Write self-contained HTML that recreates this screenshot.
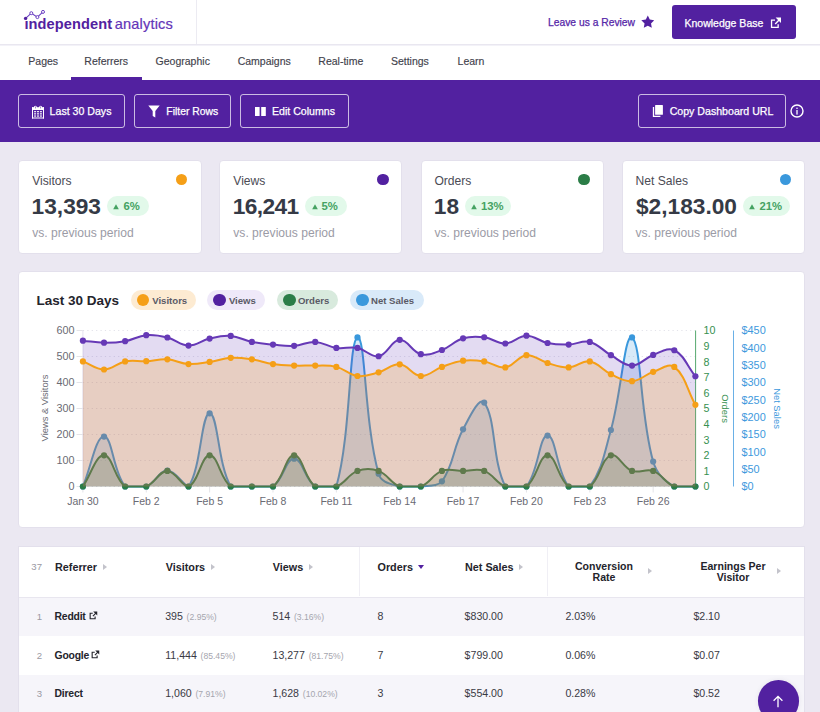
<!DOCTYPE html>
<html><head><meta charset="utf-8">
<style>
*{box-sizing:border-box;margin:0;padding:0}
html,body{width:820px;height:712px;overflow:hidden}
body{background:#ebe8f2;font-family:"Liberation Sans",sans-serif;position:relative}
.a{position:absolute;white-space:nowrap}
.hdr{position:absolute;left:0;top:0;width:820px;height:45px;background:#fff;border-bottom:1px solid #e9e7f0}
.tabs{position:absolute;left:0;top:45px;width:820px;height:35px;background:#fff}
.bar{position:absolute;left:0;top:80px;width:820px;height:61.6px;background:#5221a0}
.btn{position:absolute;border:1px solid rgba(255,255,255,0.7);border-radius:3px;color:#fff;font-size:10.6px}
.card{position:absolute;background:#fff;border:1px solid #e3e0ec;border-radius:4px}
.tl{font-family:"Liberation Sans",sans-serif;font-size:10.5px}
.at{font-family:"Liberation Sans",sans-serif;font-size:9.4px}
.tab{position:absolute;top:56px;font-size:10.5px;line-height:10.3px;color:#42424c;-webkit-text-stroke:0.15px #42424c}
.lbl{font-size:12.1px;line-height:12px;color:#4b4b55}
.num{font-size:22.7px;line-height:22px;color:#353a46;font-weight:700}
.sub{font-size:12.1px;line-height:12px;color:#9b9ba6}
.badge{position:absolute;height:20.4px;border-radius:10.2px;background:#e2f9ea;color:#3f9e5c;font-weight:700;font-size:11px}
.dot{position:absolute;width:11.5px;height:11.5px;border-radius:50%}
.pill{position:absolute;top:289.8px;height:20.5px;border-radius:10.25px}
.pill .pd{position:absolute;left:6px;top:3.9px;width:12.7px;height:12.7px;border-radius:50%}
.pill .pt{position:absolute;top:5.8px;font-size:9.6px;line-height:9.6px;font-weight:700;color:#5a5a66}
.th{position:absolute;font-size:10.8px;font-weight:700;color:#24242c;line-height:11.8px}
.td{position:absolute;font-size:10.6px;color:#3a3a44;line-height:11px}
.pc{font-size:8.6px;color:#a5a5ae;margin-left:0.8px}
.rn{position:absolute;font-size:9.6px;color:#9a9aa3;line-height:9px;text-align:right;width:20px}
.arr{position:absolute;width:0;height:0;border-top:3px solid transparent;border-bottom:3px solid transparent;border-left:4.5px solid #c3c3cb}
</style></head><body>

<!-- header -->
<div class="hdr"></div>
<div class="a" style="left:196px;top:0;width:1px;height:44px;background:#ecebf2"></div>
<!-- logo -->
<svg class="a" style="left:0;top:0" width="200" height="44" viewBox="0 0 200 44">
  <polyline points="25.6,18.4 31.3,13.2 37.4,17.1 43,11.9" fill="none" stroke="#6a3fc2" stroke-width="1.1"/>
  <circle cx="25.6" cy="18.4" r="1.7" fill="#5221a0"/>
  <circle cx="31.3" cy="13.2" r="1.5" fill="#fff" stroke="#6a3fc2" stroke-width="1"/>
  <circle cx="37.4" cy="17.1" r="1.5" fill="#fff" stroke="#6a3fc2" stroke-width="1"/>
  <circle cx="43" cy="11.9" r="1.5" fill="#fff" stroke="#6a3fc2" stroke-width="1"/>
</svg>
<div class="a" style="left:24.4px;top:16.5px;font-size:14.6px;line-height:14.6px;font-weight:700;color:#5221a0;letter-spacing:0.1px">ındependent</div>
<div class="a" style="left:114.8px;top:16.5px;font-size:14.6px;line-height:14.6px;color:#6435b8;letter-spacing:0.15px;-webkit-text-stroke:0.2px #6435b8">analytics</div>

<div class="a" style="left:548px;top:18.2px;font-size:10.3px;line-height:10.3px;color:#5526a8;-webkit-text-stroke:0.25px #5526a8">Leave us a Review</div>
<svg class="a" style="left:640.6px;top:15.4px" width="13.6" height="13.4" viewBox="0 0 24 23">
  <path d="M12 0.5l3.5 7.3 8 1.1-5.8 5.6 1.4 7.9L12 18.6l-7.1 3.8 1.4-7.9L0.5 8.9l8-1.1z" fill="#5221a0"/>
</svg>
<div class="a" style="left:672px;top:5px;width:124px;height:34px;background:#5221a0;border-radius:3px"></div>
<div class="a" style="left:684.5px;top:17.8px;font-size:10.5px;line-height:10.5px;color:#fff;-webkit-text-stroke:0.25px #fff">Knowledge Base</div>
<svg class="a" style="left:770px;top:16.5px" width="12" height="12" viewBox="0 0 12 12">
  <path d="M5 3.05H1.55V10.35H8.15V7.2" fill="none" stroke="#fff" stroke-width="1.3"/>
  <path d="M5.6 0.6H11V6z" fill="#fff"/>
  <path d="M5.2 6.9L9.6 2.5" fill="none" stroke="#fff" stroke-width="1.4"/>
</svg>

<!-- tabs -->
<div class="tabs"></div>
<div class="a" style="left:0;top:45px;width:820px;height:1px;background:#f3f2f8"></div>
<div class="tab" style="left:28.3px">Pages</div>
<div class="tab" style="left:84.3px">Referrers</div>
<div class="tab" style="left:155.6px">Geographic</div>
<div class="tab" style="left:237.7px">Campaigns</div>
<div class="tab" style="left:318.3px">Real-time</div>
<div class="tab" style="left:390.9px">Settings</div>
<div class="tab" style="left:457.6px">Learn</div>
<div class="a" style="left:71px;top:76.8px;width:71px;height:4px;background:#5221a0"></div>

<!-- purple bar -->
<div class="bar"></div>
<div class="btn" style="left:18px;top:94px;width:107px;height:34px"></div>
<svg class="a" style="left:32px;top:104.5px" width="12" height="14" viewBox="0 0 12 14">
  <rect x="0" y="2.2" width="12" height="2.8" fill="#fff"/>
  <rect x="0" y="2.2" width="1" height="11.3" fill="#fff"/>
  <rect x="11" y="2.2" width="1" height="11.3" fill="#fff"/>
  <rect x="0" y="12.5" width="12" height="1" fill="#fff"/>
  <circle cx="3.4" cy="2.3" r="1.5" fill="#fff"/><circle cx="8.6" cy="2.3" r="1.5" fill="#fff"/>
  <rect x="3.05" y="1.4" width="0.7" height="2" fill="#7a55bb"/><rect x="8.25" y="1.4" width="0.7" height="2" fill="#7a55bb"/>
  <g fill="#fff" opacity="0.9"><rect x="2.1" y="6" width="2" height="1.3"/><rect x="5" y="6" width="2" height="1.3"/><rect x="7.9" y="6" width="2" height="1.3"/>
  <rect x="2.1" y="8.2" width="2" height="1.3"/><rect x="5" y="8.2" width="2" height="1.3"/><rect x="7.9" y="8.2" width="2" height="1.3"/>
  <rect x="2.1" y="10.4" width="2" height="1.3"/><rect x="5" y="10.4" width="2" height="1.3"/><rect x="7.9" y="10.4" width="2" height="1.3"/></g>
</svg>
<div class="a" style="left:49.6px;top:106.4px;font-size:10.6px;line-height:10.6px;color:#fff;-webkit-text-stroke:0.25px #fff">Last 30 Days</div>

<div class="btn" style="left:134px;top:94px;width:97px;height:34px"></div>
<svg class="a" style="left:147.5px;top:104.8px" width="12" height="13" viewBox="0 0 12 13">
  <path d="M0.3 0.5h11.4L7.3 6v6.5L4.7 11V6z" fill="#fff"/>
</svg>
<div class="a" style="left:166.3px;top:106.6px;font-size:10.4px;line-height:10.6px;color:#fff;-webkit-text-stroke:0.25px #fff">Filter Rows</div>

<div class="btn" style="left:240px;top:94px;width:108.5px;height:34px"></div>
<svg class="a" style="left:254.5px;top:106.5px" width="11" height="9" viewBox="0 0 11 9">
  <rect x="0" y="0" width="4.6" height="9" fill="#fff"/><rect x="6.2" y="0" width="4.6" height="9" fill="#fff"/>
</svg>
<div class="a" style="left:272px;top:106.4px;font-size:10.6px;line-height:10.6px;color:#fff;-webkit-text-stroke:0.25px #fff">Edit Columns</div>

<div class="btn" style="left:638px;top:94.3px;width:148px;height:34px"></div>
<svg class="a" style="left:652px;top:104px" width="12" height="14" viewBox="0 0 12 14">
  <rect x="3.1" y="1.0" width="7.8" height="9.8" rx="0.5" fill="#fff"/>
  <path d="M1.5 3.1V12.4H8.4" fill="none" stroke="#fff" stroke-width="1.3"/>
</svg>
<div class="a" style="left:669.7px;top:106.4px;font-size:10.6px;line-height:10.6px;color:#fff;-webkit-text-stroke:0.25px #fff">Copy Dashboard URL</div>
<svg class="a" style="left:790.2px;top:104.3px" width="14" height="14" viewBox="0 0 14 14">
  <circle cx="7" cy="7" r="6" fill="none" stroke="#fff" stroke-width="1.4"/>
  <circle cx="7" cy="4.3" r="0.8" fill="#fff"/>
  <rect x="6.35" y="6" width="1.3" height="4.6" fill="#fff"/>
</svg>

<!-- stat cards -->
<div class="card" style="left:18px;top:160px;width:184px;height:94px"></div>
<div class="card" style="left:219px;top:160px;width:183px;height:94px"></div>
<div class="card" style="left:421px;top:160px;width:183px;height:94px"></div>
<div class="card" style="left:622px;top:160px;width:183px;height:94px"></div>

<div class="a lbl" style="left:32.2px;top:174.7px">Visitors</div>
<div class="dot" style="left:175.9px;top:173.8px;background:#f59f17"></div>
<div class="a num" style="left:31.6px;top:194.9px">13,393</div>
<div class="badge" style="left:107px;top:195.9px;width:42px"></div>
<svg class="a" style="left:113.4px;top:203.6px" width="6" height="6" viewBox="0 0 6 6"><path d="M3 0.3L5.8 5.2H0.2z" fill="#45a262"/></svg>
<div class="a" style="left:123.4px;top:201.1px;font-size:11.3px;line-height:11px;font-weight:700;color:#45a262">6%</div>
<div class="a sub" style="left:32.2px;top:227.4px">vs. previous period</div>

<div class="a lbl" style="left:233.3px;top:174.7px">Views</div>
<div class="dot" style="left:377px;top:173.8px;background:#5221a0"></div>
<div class="a num" style="left:232.7px;top:194.9px;letter-spacing:-0.6px">16,241</div>
<div class="badge" style="left:305.1px;top:195.9px;width:41.6px"></div>
<svg class="a" style="left:311.5px;top:203.6px" width="6" height="6" viewBox="0 0 6 6"><path d="M3 0.3L5.8 5.2H0.2z" fill="#45a262"/></svg>
<div class="a" style="left:321.5px;top:201.1px;font-size:11.3px;line-height:11px;font-weight:700;color:#45a262">5%</div>
<div class="a sub" style="left:233.3px;top:227.4px">vs. previous period</div>

<div class="a lbl" style="left:434.4px;top:174.7px">Orders</div>
<div class="dot" style="left:578.1px;top:173.8px;background:#2b7d47"></div>
<div class="a num" style="left:433.8px;top:194.9px">18</div>
<div class="badge" style="left:464.6px;top:195.9px;width:46.5px"></div>
<svg class="a" style="left:471.0px;top:203.6px" width="6" height="6" viewBox="0 0 6 6"><path d="M3 0.3L5.8 5.2H0.2z" fill="#45a262"/></svg>
<div class="a" style="left:481.0px;top:201.1px;font-size:11.3px;line-height:11px;font-weight:700;color:#45a262">13%</div>
<div class="a sub" style="left:434.4px;top:227.4px">vs. previous period</div>

<div class="a lbl" style="left:635.5px;top:174.7px">Net Sales</div>
<div class="dot" style="left:779.6px;top:173.8px;background:#3a98dc"></div>
<div class="a num" style="left:636px;top:194.9px">$2,183.00</div>
<div class="badge" style="left:743px;top:195.9px;width:46.6px"></div>
<svg class="a" style="left:749.4px;top:203.6px" width="6" height="6" viewBox="0 0 6 6"><path d="M3 0.3L5.8 5.2H0.2z" fill="#45a262"/></svg>
<div class="a" style="left:759.4px;top:201.1px;font-size:11.3px;line-height:11px;font-weight:700;color:#45a262">21%</div>
<div class="a sub" style="left:635.5px;top:227.4px">vs. previous period</div>

<!-- chart card -->
<div class="card" style="left:18px;top:271px;width:787px;height:256.5px"></div>
<div class="a" style="left:36.5px;top:293.8px;font-size:13.5px;line-height:13.5px;font-weight:700;color:#24242c">Last 30 Days</div>
<div class="pill" style="left:130.7px;width:65px;background:#fdebd2"><div class="pd" style="background:#f59f17"></div><div class="pt" style="left:21.5px">Visitors</div></div>
<div class="pill" style="left:207.4px;width:57.4px;background:#efe9f9"><div class="pd" style="background:#5221a0"></div><div class="pt" style="left:21.5px">Views</div></div>
<div class="pill" style="left:277.2px;width:61.1px;background:#d8eadd"><div class="pd" style="background:#2b7d47"></div><div class="pt" style="left:20.7px">Orders</div></div>
<div class="pill" style="left:350px;width:74.1px;background:#d9eaf9"><div class="pd" style="background:#3a98dc"></div><div class="pt" style="left:21px">Net Sales</div></div>

<svg width="820" height="712" viewBox="0 0 820 712" style="position:absolute;left:0;top:0">
<line x1="82.9" y1="330.50" x2="695.4" y2="330.50" stroke="#e3e3ea" stroke-width="1.1" stroke-dasharray="1.2,3.2"/>
<line x1="76.5" y1="330.50" x2="82.9" y2="330.50" stroke="#e4e4e8" stroke-width="1"/>
<line x1="82.9" y1="356.50" x2="695.4" y2="356.50" stroke="#e3e3ea" stroke-width="1.1" stroke-dasharray="1.2,3.2"/>
<line x1="76.5" y1="356.50" x2="82.9" y2="356.50" stroke="#e4e4e8" stroke-width="1"/>
<line x1="82.9" y1="382.50" x2="695.4" y2="382.50" stroke="#e3e3ea" stroke-width="1.1" stroke-dasharray="1.2,3.2"/>
<line x1="76.5" y1="382.50" x2="82.9" y2="382.50" stroke="#e4e4e8" stroke-width="1"/>
<line x1="82.9" y1="408.50" x2="695.4" y2="408.50" stroke="#e3e3ea" stroke-width="1.1" stroke-dasharray="1.2,3.2"/>
<line x1="76.5" y1="408.50" x2="82.9" y2="408.50" stroke="#e4e4e8" stroke-width="1"/>
<line x1="82.9" y1="434.50" x2="695.4" y2="434.50" stroke="#e3e3ea" stroke-width="1.1" stroke-dasharray="1.2,3.2"/>
<line x1="76.5" y1="434.50" x2="82.9" y2="434.50" stroke="#e4e4e8" stroke-width="1"/>
<line x1="82.9" y1="460.50" x2="695.4" y2="460.50" stroke="#e3e3ea" stroke-width="1.1" stroke-dasharray="1.2,3.2"/>
<line x1="76.5" y1="460.50" x2="82.9" y2="460.50" stroke="#e4e4e8" stroke-width="1"/>
<line x1="82.9" y1="486.50" x2="695.4" y2="486.50" stroke="#e3e3ea" stroke-width="1.1" stroke-dasharray="1.2,3.2"/>
<line x1="76.5" y1="486.50" x2="82.9" y2="486.50" stroke="#e4e4e8" stroke-width="1"/>
<line x1="82.90" y1="486.5" x2="82.90" y2="492.5" stroke="#e4e4e8" stroke-width="1"/>
<line x1="146.26" y1="486.5" x2="146.26" y2="492.5" stroke="#e4e4e8" stroke-width="1"/>
<line x1="209.62" y1="486.5" x2="209.62" y2="492.5" stroke="#e4e4e8" stroke-width="1"/>
<line x1="272.99" y1="486.5" x2="272.99" y2="492.5" stroke="#e4e4e8" stroke-width="1"/>
<line x1="336.35" y1="486.5" x2="336.35" y2="492.5" stroke="#e4e4e8" stroke-width="1"/>
<line x1="399.71" y1="486.5" x2="399.71" y2="492.5" stroke="#e4e4e8" stroke-width="1"/>
<line x1="463.07" y1="486.5" x2="463.07" y2="492.5" stroke="#e4e4e8" stroke-width="1"/>
<line x1="526.43" y1="486.5" x2="526.43" y2="492.5" stroke="#e4e4e8" stroke-width="1"/>
<line x1="589.80" y1="486.5" x2="589.80" y2="492.5" stroke="#e4e4e8" stroke-width="1"/>
<line x1="653.16" y1="486.5" x2="653.16" y2="492.5" stroke="#e4e4e8" stroke-width="1"/>
<line x1="82.90" y1="330.5" x2="82.90" y2="486.5" stroke="#e6e4f0" stroke-width="1"/>
<line x1="695.6" y1="330.5" x2="695.6" y2="486.5" stroke="#55a86e" stroke-width="1"/>
<line x1="733.5" y1="330.5" x2="733.5" y2="486.5" stroke="#6ab0e6" stroke-width="1"/>
<path d="M82.90,486.50 C91.35,466.53 95.57,436.58 104.02,436.58 C112.47,436.58 112.98,472.13 125.14,486.50 C129.88,486.50 138.76,486.50 146.26,486.50 C155.66,482.95 158.93,470.55 167.38,470.55 C175.83,470.55 184.15,486.50 188.50,486.50 C201.04,469.52 201.18,413.35 209.62,413.35 C218.07,413.35 217.52,463.60 230.74,486.50 C234.41,486.50 243.42,486.50 251.87,486.50 C260.31,486.50 266.61,486.50 272.99,486.50 C283.51,479.59 285.66,458.77 294.11,458.77 C302.56,458.77 304.71,479.59 315.23,486.50 C321.60,486.50 334.27,486.50 336.35,486.50 C351.17,434.21 348.65,340.11 357.47,337.43 C365.55,334.98 364.26,423.11 378.59,473.67 C381.16,482.74 390.60,483.73 399.71,486.50 C407.50,486.50 412.51,486.50 420.83,486.50 C429.40,485.44 437.23,486.50 441.95,481.30 C454.13,464.81 452.55,448.89 463.07,429.30 C469.45,417.42 479.42,396.15 484.19,402.61 C496.32,419.03 491.73,459.53 505.31,486.50 C508.63,486.50 521.76,486.50 526.43,486.50 C538.65,471.76 539.11,435.54 547.56,435.54 C556.00,435.54 556.46,471.76 568.68,486.50 C573.35,486.50 585.41,486.50 589.80,486.50 C602.31,469.76 604.35,453.16 610.92,429.99 C621.25,393.53 624.77,332.01 632.04,337.43 C641.67,344.63 639.75,414.21 653.16,461.54 C656.64,473.83 664.01,480.43 674.28,486.50 C680.91,486.50 686.95,486.50 695.40,486.50 L695.40,486.50 L82.90,486.50 Z" fill="rgba(58,152,220,0.2)"/><path d="M82.90,486.50 C91.35,466.53 95.57,436.58 104.02,436.58 C112.47,436.58 112.98,472.13 125.14,486.50 C129.88,486.50 138.76,486.50 146.26,486.50 C155.66,482.95 158.93,470.55 167.38,470.55 C175.83,470.55 184.15,486.50 188.50,486.50 C201.04,469.52 201.18,413.35 209.62,413.35 C218.07,413.35 217.52,463.60 230.74,486.50 C234.41,486.50 243.42,486.50 251.87,486.50 C260.31,486.50 266.61,486.50 272.99,486.50 C283.51,479.59 285.66,458.77 294.11,458.77 C302.56,458.77 304.71,479.59 315.23,486.50 C321.60,486.50 334.27,486.50 336.35,486.50 C351.17,434.21 348.65,340.11 357.47,337.43 C365.55,334.98 364.26,423.11 378.59,473.67 C381.16,482.74 390.60,483.73 399.71,486.50 C407.50,486.50 412.51,486.50 420.83,486.50 C429.40,485.44 437.23,486.50 441.95,481.30 C454.13,464.81 452.55,448.89 463.07,429.30 C469.45,417.42 479.42,396.15 484.19,402.61 C496.32,419.03 491.73,459.53 505.31,486.50 C508.63,486.50 521.76,486.50 526.43,486.50 C538.65,471.76 539.11,435.54 547.56,435.54 C556.00,435.54 556.46,471.76 568.68,486.50 C573.35,486.50 585.41,486.50 589.80,486.50 C602.31,469.76 604.35,453.16 610.92,429.99 C621.25,393.53 624.77,332.01 632.04,337.43 C641.67,344.63 639.75,414.21 653.16,461.54 C656.64,473.83 664.01,480.43 674.28,486.50 C680.91,486.50 686.95,486.50 695.40,486.50" fill="none" stroke="#3a98dc" stroke-width="2" stroke-linejoin="round"/><circle cx="82.90" cy="486.50" r="3.1" fill="#3a98dc"/><circle cx="104.02" cy="436.58" r="3.1" fill="#3a98dc"/><circle cx="125.14" cy="486.50" r="3.1" fill="#3a98dc"/><circle cx="146.26" cy="486.50" r="3.1" fill="#3a98dc"/><circle cx="167.38" cy="470.55" r="3.1" fill="#3a98dc"/><circle cx="188.50" cy="486.50" r="3.1" fill="#3a98dc"/><circle cx="209.62" cy="413.35" r="3.1" fill="#3a98dc"/><circle cx="230.74" cy="486.50" r="3.1" fill="#3a98dc"/><circle cx="251.87" cy="486.50" r="3.1" fill="#3a98dc"/><circle cx="272.99" cy="486.50" r="3.1" fill="#3a98dc"/><circle cx="294.11" cy="458.77" r="3.1" fill="#3a98dc"/><circle cx="315.23" cy="486.50" r="3.1" fill="#3a98dc"/><circle cx="336.35" cy="486.50" r="3.1" fill="#3a98dc"/><circle cx="357.47" cy="337.43" r="3.1" fill="#3a98dc"/><circle cx="378.59" cy="473.67" r="3.1" fill="#3a98dc"/><circle cx="399.71" cy="486.50" r="3.1" fill="#3a98dc"/><circle cx="420.83" cy="486.50" r="3.1" fill="#3a98dc"/><circle cx="441.95" cy="481.30" r="3.1" fill="#3a98dc"/><circle cx="463.07" cy="429.30" r="3.1" fill="#3a98dc"/><circle cx="484.19" cy="402.61" r="3.1" fill="#3a98dc"/><circle cx="505.31" cy="486.50" r="3.1" fill="#3a98dc"/><circle cx="526.43" cy="486.50" r="3.1" fill="#3a98dc"/><circle cx="547.56" cy="435.54" r="3.1" fill="#3a98dc"/><circle cx="568.68" cy="486.50" r="3.1" fill="#3a98dc"/><circle cx="589.80" cy="486.50" r="3.1" fill="#3a98dc"/><circle cx="610.92" cy="429.99" r="3.1" fill="#3a98dc"/><circle cx="632.04" cy="337.43" r="3.1" fill="#3a98dc"/><circle cx="653.16" cy="461.54" r="3.1" fill="#3a98dc"/><circle cx="674.28" cy="486.50" r="3.1" fill="#3a98dc"/><circle cx="695.40" cy="486.50" r="3.1" fill="#3a98dc"/>
<path d="M82.90,486.50 C91.35,474.02 95.57,455.30 104.02,455.30 C112.47,455.30 114.31,478.50 125.14,486.50 C131.21,486.50 138.73,486.50 146.26,486.50 C155.63,483.04 158.93,470.90 167.38,470.90 C175.83,470.90 181.56,486.50 188.50,486.50 C198.46,482.82 201.18,455.30 209.62,455.30 C218.07,455.30 219.92,478.50 230.74,486.50 C236.81,486.50 243.42,486.50 251.87,486.50 C260.31,486.50 266.92,486.50 272.99,486.50 C283.81,478.50 285.66,455.30 294.11,455.30 C302.56,455.30 304.40,478.50 315.23,486.50 C321.30,486.50 328.82,486.50 336.35,486.50 C345.71,483.04 348.10,474.36 357.47,470.90 C365.00,468.12 371.06,468.12 378.59,470.90 C387.95,474.36 390.35,483.04 399.71,486.50 C407.24,486.50 413.30,486.50 420.83,486.50 C430.20,483.04 432.59,474.36 441.95,470.90 C449.48,468.12 454.62,470.90 463.07,470.90 C471.52,470.90 476.66,468.12 484.19,470.90 C493.56,474.36 495.95,483.04 505.31,486.50 C512.85,486.50 520.37,486.50 526.43,486.50 C537.26,478.50 539.11,455.30 547.56,455.30 C556.00,455.30 557.85,478.50 568.68,486.50 C574.75,486.50 583.73,486.50 589.80,486.50 C600.62,478.50 600.96,458.98 610.92,455.30 C617.86,452.74 622.67,467.44 632.04,470.90 C639.57,473.68 645.63,468.12 653.16,470.90 C662.52,474.36 664.92,483.04 674.28,486.50 C681.81,486.50 686.95,486.50 695.40,486.50 L695.40,486.50 L82.90,486.50 Z" fill="rgba(43,125,71,0.2)"/><path d="M82.90,486.50 C91.35,474.02 95.57,455.30 104.02,455.30 C112.47,455.30 114.31,478.50 125.14,486.50 C131.21,486.50 138.73,486.50 146.26,486.50 C155.63,483.04 158.93,470.90 167.38,470.90 C175.83,470.90 181.56,486.50 188.50,486.50 C198.46,482.82 201.18,455.30 209.62,455.30 C218.07,455.30 219.92,478.50 230.74,486.50 C236.81,486.50 243.42,486.50 251.87,486.50 C260.31,486.50 266.92,486.50 272.99,486.50 C283.81,478.50 285.66,455.30 294.11,455.30 C302.56,455.30 304.40,478.50 315.23,486.50 C321.30,486.50 328.82,486.50 336.35,486.50 C345.71,483.04 348.10,474.36 357.47,470.90 C365.00,468.12 371.06,468.12 378.59,470.90 C387.95,474.36 390.35,483.04 399.71,486.50 C407.24,486.50 413.30,486.50 420.83,486.50 C430.20,483.04 432.59,474.36 441.95,470.90 C449.48,468.12 454.62,470.90 463.07,470.90 C471.52,470.90 476.66,468.12 484.19,470.90 C493.56,474.36 495.95,483.04 505.31,486.50 C512.85,486.50 520.37,486.50 526.43,486.50 C537.26,478.50 539.11,455.30 547.56,455.30 C556.00,455.30 557.85,478.50 568.68,486.50 C574.75,486.50 583.73,486.50 589.80,486.50 C600.62,478.50 600.96,458.98 610.92,455.30 C617.86,452.74 622.67,467.44 632.04,470.90 C639.57,473.68 645.63,468.12 653.16,470.90 C662.52,474.36 664.92,483.04 674.28,486.50 C681.81,486.50 686.95,486.50 695.40,486.50" fill="none" stroke="#2b7d47" stroke-width="2" stroke-linejoin="round"/><circle cx="82.90" cy="486.50" r="3.1" fill="#2b7d47"/><circle cx="104.02" cy="455.30" r="3.1" fill="#2b7d47"/><circle cx="125.14" cy="486.50" r="3.1" fill="#2b7d47"/><circle cx="146.26" cy="486.50" r="3.1" fill="#2b7d47"/><circle cx="167.38" cy="470.90" r="3.1" fill="#2b7d47"/><circle cx="188.50" cy="486.50" r="3.1" fill="#2b7d47"/><circle cx="209.62" cy="455.30" r="3.1" fill="#2b7d47"/><circle cx="230.74" cy="486.50" r="3.1" fill="#2b7d47"/><circle cx="251.87" cy="486.50" r="3.1" fill="#2b7d47"/><circle cx="272.99" cy="486.50" r="3.1" fill="#2b7d47"/><circle cx="294.11" cy="455.30" r="3.1" fill="#2b7d47"/><circle cx="315.23" cy="486.50" r="3.1" fill="#2b7d47"/><circle cx="336.35" cy="486.50" r="3.1" fill="#2b7d47"/><circle cx="357.47" cy="470.90" r="3.1" fill="#2b7d47"/><circle cx="378.59" cy="470.90" r="3.1" fill="#2b7d47"/><circle cx="399.71" cy="486.50" r="3.1" fill="#2b7d47"/><circle cx="420.83" cy="486.50" r="3.1" fill="#2b7d47"/><circle cx="441.95" cy="470.90" r="3.1" fill="#2b7d47"/><circle cx="463.07" cy="470.90" r="3.1" fill="#2b7d47"/><circle cx="484.19" cy="470.90" r="3.1" fill="#2b7d47"/><circle cx="505.31" cy="486.50" r="3.1" fill="#2b7d47"/><circle cx="526.43" cy="486.50" r="3.1" fill="#2b7d47"/><circle cx="547.56" cy="455.30" r="3.1" fill="#2b7d47"/><circle cx="568.68" cy="486.50" r="3.1" fill="#2b7d47"/><circle cx="589.80" cy="486.50" r="3.1" fill="#2b7d47"/><circle cx="610.92" cy="455.30" r="3.1" fill="#2b7d47"/><circle cx="632.04" cy="470.90" r="3.1" fill="#2b7d47"/><circle cx="653.16" cy="470.90" r="3.1" fill="#2b7d47"/><circle cx="674.28" cy="486.50" r="3.1" fill="#2b7d47"/><circle cx="695.40" cy="486.50" r="3.1" fill="#2b7d47"/>
<path d="M82.90,340.64 C91.35,341.47 95.56,342.62 104.02,342.72 C112.46,342.82 116.84,342.64 125.14,341.16 C133.74,339.62 137.68,335.92 146.26,335.18 C154.57,334.46 159.20,335.50 167.38,337.52 C176.09,339.66 179.99,345.37 188.50,345.58 C196.89,345.79 200.99,340.53 209.62,338.56 C217.88,336.68 222.43,335.29 230.74,335.96 C239.32,336.65 243.29,340.20 251.87,341.94 C260.18,343.63 264.51,343.76 272.99,344.54 C281.41,345.32 285.72,346.36 294.11,345.84 C302.62,345.32 306.87,341.53 315.23,341.94 C323.77,342.36 327.74,346.70 336.35,347.92 C344.63,349.09 349.33,346.32 357.47,347.92 C366.22,349.64 370.83,357.72 378.59,356.24 C387.73,354.50 391.06,340.29 399.71,339.86 C407.96,339.45 411.67,351.96 420.83,354.16 C428.56,356.02 433.99,352.99 441.95,350.00 C450.88,346.65 454.06,341.02 463.07,338.30 C470.96,335.92 475.92,336.24 484.19,337.26 C492.81,338.32 496.96,343.81 505.31,343.50 C513.86,343.18 517.95,335.80 526.43,335.70 C534.85,335.60 538.88,341.16 547.56,342.98 C555.78,344.70 560.25,344.75 568.68,344.54 C577.14,344.33 582.02,339.98 589.80,341.94 C598.91,344.24 602.23,350.33 610.92,355.20 C619.12,359.80 623.61,365.65 632.04,365.60 C640.51,365.55 644.33,358.15 653.16,354.94 C661.23,352.01 667.65,346.91 674.28,350.26 C684.55,355.44 686.95,365.86 695.40,376.26 L695.40,486.50 L82.90,486.50 Z" fill="rgba(102,57,182,0.18)"/><path d="M82.90,340.64 C91.35,341.47 95.56,342.62 104.02,342.72 C112.46,342.82 116.84,342.64 125.14,341.16 C133.74,339.62 137.68,335.92 146.26,335.18 C154.57,334.46 159.20,335.50 167.38,337.52 C176.09,339.66 179.99,345.37 188.50,345.58 C196.89,345.79 200.99,340.53 209.62,338.56 C217.88,336.68 222.43,335.29 230.74,335.96 C239.32,336.65 243.29,340.20 251.87,341.94 C260.18,343.63 264.51,343.76 272.99,344.54 C281.41,345.32 285.72,346.36 294.11,345.84 C302.62,345.32 306.87,341.53 315.23,341.94 C323.77,342.36 327.74,346.70 336.35,347.92 C344.63,349.09 349.33,346.32 357.47,347.92 C366.22,349.64 370.83,357.72 378.59,356.24 C387.73,354.50 391.06,340.29 399.71,339.86 C407.96,339.45 411.67,351.96 420.83,354.16 C428.56,356.02 433.99,352.99 441.95,350.00 C450.88,346.65 454.06,341.02 463.07,338.30 C470.96,335.92 475.92,336.24 484.19,337.26 C492.81,338.32 496.96,343.81 505.31,343.50 C513.86,343.18 517.95,335.80 526.43,335.70 C534.85,335.60 538.88,341.16 547.56,342.98 C555.78,344.70 560.25,344.75 568.68,344.54 C577.14,344.33 582.02,339.98 589.80,341.94 C598.91,344.24 602.23,350.33 610.92,355.20 C619.12,359.80 623.61,365.65 632.04,365.60 C640.51,365.55 644.33,358.15 653.16,354.94 C661.23,352.01 667.65,346.91 674.28,350.26 C684.55,355.44 686.95,365.86 695.40,376.26" fill="none" stroke="#6639b6" stroke-width="2" stroke-linejoin="round"/><circle cx="82.90" cy="340.64" r="3.1" fill="#6639b6"/><circle cx="104.02" cy="342.72" r="3.1" fill="#6639b6"/><circle cx="125.14" cy="341.16" r="3.1" fill="#6639b6"/><circle cx="146.26" cy="335.18" r="3.1" fill="#6639b6"/><circle cx="167.38" cy="337.52" r="3.1" fill="#6639b6"/><circle cx="188.50" cy="345.58" r="3.1" fill="#6639b6"/><circle cx="209.62" cy="338.56" r="3.1" fill="#6639b6"/><circle cx="230.74" cy="335.96" r="3.1" fill="#6639b6"/><circle cx="251.87" cy="341.94" r="3.1" fill="#6639b6"/><circle cx="272.99" cy="344.54" r="3.1" fill="#6639b6"/><circle cx="294.11" cy="345.84" r="3.1" fill="#6639b6"/><circle cx="315.23" cy="341.94" r="3.1" fill="#6639b6"/><circle cx="336.35" cy="347.92" r="3.1" fill="#6639b6"/><circle cx="357.47" cy="347.92" r="3.1" fill="#6639b6"/><circle cx="378.59" cy="356.24" r="3.1" fill="#6639b6"/><circle cx="399.71" cy="339.86" r="3.1" fill="#6639b6"/><circle cx="420.83" cy="354.16" r="3.1" fill="#6639b6"/><circle cx="441.95" cy="350.00" r="3.1" fill="#6639b6"/><circle cx="463.07" cy="338.30" r="3.1" fill="#6639b6"/><circle cx="484.19" cy="337.26" r="3.1" fill="#6639b6"/><circle cx="505.31" cy="343.50" r="3.1" fill="#6639b6"/><circle cx="526.43" cy="335.70" r="3.1" fill="#6639b6"/><circle cx="547.56" cy="342.98" r="3.1" fill="#6639b6"/><circle cx="568.68" cy="344.54" r="3.1" fill="#6639b6"/><circle cx="589.80" cy="341.94" r="3.1" fill="#6639b6"/><circle cx="610.92" cy="355.20" r="3.1" fill="#6639b6"/><circle cx="632.04" cy="365.60" r="3.1" fill="#6639b6"/><circle cx="653.16" cy="354.94" r="3.1" fill="#6639b6"/><circle cx="674.28" cy="350.26" r="3.1" fill="#6639b6"/><circle cx="695.40" cy="376.26" r="3.1" fill="#6639b6"/>
<path d="M82.90,361.44 C91.35,364.66 95.57,369.50 104.02,369.50 C112.47,369.50 116.41,363.16 125.14,361.44 C133.30,359.83 137.83,361.60 146.26,361.18 C154.73,360.76 159.02,358.79 167.38,359.36 C175.92,359.94 179.97,363.52 188.50,364.04 C196.87,364.56 201.24,363.20 209.62,361.96 C218.13,360.70 222.23,358.32 230.74,357.80 C239.12,357.28 243.51,358.13 251.87,359.36 C260.40,360.62 264.45,362.78 272.99,364.04 C281.34,365.27 285.65,365.29 294.11,365.60 C302.54,365.91 306.79,365.34 315.23,365.60 C323.68,365.86 328.25,364.91 336.35,366.90 C345.15,369.07 348.72,374.87 357.47,376.00 C365.62,377.05 370.37,374.64 378.59,372.36 C387.26,369.96 391.54,363.60 399.71,364.30 C408.44,365.05 412.18,375.47 420.83,376.00 C429.07,376.51 433.32,370.03 441.95,366.90 C450.22,363.90 454.45,361.77 463.07,360.66 C471.35,359.59 475.90,360.11 484.19,361.44 C492.80,362.82 497.31,368.60 505.31,367.42 C514.21,366.11 517.65,356.12 526.43,355.20 C534.54,354.35 538.93,360.50 547.56,363.00 C555.82,365.39 560.30,367.73 568.68,367.42 C577.20,367.11 581.84,360.17 589.80,361.44 C598.74,362.87 602.04,370.03 610.92,374.18 C618.93,377.93 623.75,381.66 632.04,381.20 C640.64,380.72 644.44,374.79 653.16,371.84 C661.34,369.07 668.65,362.50 674.28,366.90 C685.55,375.71 686.95,389.68 695.40,404.86 L695.40,486.50 L82.90,486.50 Z" fill="rgba(245,159,23,0.22)"/><path d="M82.90,361.44 C91.35,364.66 95.57,369.50 104.02,369.50 C112.47,369.50 116.41,363.16 125.14,361.44 C133.30,359.83 137.83,361.60 146.26,361.18 C154.73,360.76 159.02,358.79 167.38,359.36 C175.92,359.94 179.97,363.52 188.50,364.04 C196.87,364.56 201.24,363.20 209.62,361.96 C218.13,360.70 222.23,358.32 230.74,357.80 C239.12,357.28 243.51,358.13 251.87,359.36 C260.40,360.62 264.45,362.78 272.99,364.04 C281.34,365.27 285.65,365.29 294.11,365.60 C302.54,365.91 306.79,365.34 315.23,365.60 C323.68,365.86 328.25,364.91 336.35,366.90 C345.15,369.07 348.72,374.87 357.47,376.00 C365.62,377.05 370.37,374.64 378.59,372.36 C387.26,369.96 391.54,363.60 399.71,364.30 C408.44,365.05 412.18,375.47 420.83,376.00 C429.07,376.51 433.32,370.03 441.95,366.90 C450.22,363.90 454.45,361.77 463.07,360.66 C471.35,359.59 475.90,360.11 484.19,361.44 C492.80,362.82 497.31,368.60 505.31,367.42 C514.21,366.11 517.65,356.12 526.43,355.20 C534.54,354.35 538.93,360.50 547.56,363.00 C555.82,365.39 560.30,367.73 568.68,367.42 C577.20,367.11 581.84,360.17 589.80,361.44 C598.74,362.87 602.04,370.03 610.92,374.18 C618.93,377.93 623.75,381.66 632.04,381.20 C640.64,380.72 644.44,374.79 653.16,371.84 C661.34,369.07 668.65,362.50 674.28,366.90 C685.55,375.71 686.95,389.68 695.40,404.86" fill="none" stroke="#f59f17" stroke-width="2" stroke-linejoin="round"/><circle cx="82.90" cy="361.44" r="3.1" fill="#f59f17"/><circle cx="104.02" cy="369.50" r="3.1" fill="#f59f17"/><circle cx="125.14" cy="361.44" r="3.1" fill="#f59f17"/><circle cx="146.26" cy="361.18" r="3.1" fill="#f59f17"/><circle cx="167.38" cy="359.36" r="3.1" fill="#f59f17"/><circle cx="188.50" cy="364.04" r="3.1" fill="#f59f17"/><circle cx="209.62" cy="361.96" r="3.1" fill="#f59f17"/><circle cx="230.74" cy="357.80" r="3.1" fill="#f59f17"/><circle cx="251.87" cy="359.36" r="3.1" fill="#f59f17"/><circle cx="272.99" cy="364.04" r="3.1" fill="#f59f17"/><circle cx="294.11" cy="365.60" r="3.1" fill="#f59f17"/><circle cx="315.23" cy="365.60" r="3.1" fill="#f59f17"/><circle cx="336.35" cy="366.90" r="3.1" fill="#f59f17"/><circle cx="357.47" cy="376.00" r="3.1" fill="#f59f17"/><circle cx="378.59" cy="372.36" r="3.1" fill="#f59f17"/><circle cx="399.71" cy="364.30" r="3.1" fill="#f59f17"/><circle cx="420.83" cy="376.00" r="3.1" fill="#f59f17"/><circle cx="441.95" cy="366.90" r="3.1" fill="#f59f17"/><circle cx="463.07" cy="360.66" r="3.1" fill="#f59f17"/><circle cx="484.19" cy="361.44" r="3.1" fill="#f59f17"/><circle cx="505.31" cy="367.42" r="3.1" fill="#f59f17"/><circle cx="526.43" cy="355.20" r="3.1" fill="#f59f17"/><circle cx="547.56" cy="363.00" r="3.1" fill="#f59f17"/><circle cx="568.68" cy="367.42" r="3.1" fill="#f59f17"/><circle cx="589.80" cy="361.44" r="3.1" fill="#f59f17"/><circle cx="610.92" cy="374.18" r="3.1" fill="#f59f17"/><circle cx="632.04" cy="381.20" r="3.1" fill="#f59f17"/><circle cx="653.16" cy="371.84" r="3.1" fill="#f59f17"/><circle cx="674.28" cy="366.90" r="3.1" fill="#f59f17"/><circle cx="695.40" cy="404.86" r="3.1" fill="#f59f17"/>
<text x="74.5" y="334.30" text-anchor="end" class="tl" style="font-size:10.8px" fill="#6a6a73">600</text>
<text x="74.5" y="360.30" text-anchor="end" class="tl" style="font-size:10.8px" fill="#6a6a73">500</text>
<text x="74.5" y="386.30" text-anchor="end" class="tl" style="font-size:10.8px" fill="#6a6a73">400</text>
<text x="74.5" y="412.30" text-anchor="end" class="tl" style="font-size:10.8px" fill="#6a6a73">300</text>
<text x="74.5" y="438.30" text-anchor="end" class="tl" style="font-size:10.8px" fill="#6a6a73">200</text>
<text x="74.5" y="464.30" text-anchor="end" class="tl" style="font-size:10.8px" fill="#6a6a73">100</text>
<text x="74.5" y="490.30" text-anchor="end" class="tl" style="font-size:10.8px" fill="#6a6a73">0</text>
<text x="703.5" y="490.30" class="tl" style="font-size:10.7px" fill="#36904f">0</text>
<text x="703.5" y="474.70" class="tl" style="font-size:10.7px" fill="#36904f">1</text>
<text x="703.5" y="459.10" class="tl" style="font-size:10.7px" fill="#36904f">2</text>
<text x="703.5" y="443.50" class="tl" style="font-size:10.7px" fill="#36904f">3</text>
<text x="703.5" y="427.90" class="tl" style="font-size:10.7px" fill="#36904f">4</text>
<text x="703.5" y="412.30" class="tl" style="font-size:10.7px" fill="#36904f">5</text>
<text x="703.5" y="396.70" class="tl" style="font-size:10.7px" fill="#36904f">6</text>
<text x="703.5" y="381.10" class="tl" style="font-size:10.7px" fill="#36904f">7</text>
<text x="703.5" y="365.50" class="tl" style="font-size:10.7px" fill="#36904f">8</text>
<text x="703.5" y="349.90" class="tl" style="font-size:10.7px" fill="#36904f">9</text>
<text x="703.5" y="334.30" class="tl" style="font-size:10.7px" fill="#36904f">10</text>
<text x="741.5" y="490.30" class="tl" style="font-size:10.9px" fill="#4099dd">$0</text>
<text x="741.5" y="472.97" class="tl" style="font-size:10.9px" fill="#4099dd">$50</text>
<text x="741.5" y="455.63" class="tl" style="font-size:10.9px" fill="#4099dd">$100</text>
<text x="741.5" y="438.30" class="tl" style="font-size:10.9px" fill="#4099dd">$150</text>
<text x="741.5" y="420.97" class="tl" style="font-size:10.9px" fill="#4099dd">$200</text>
<text x="741.5" y="403.63" class="tl" style="font-size:10.9px" fill="#4099dd">$250</text>
<text x="741.5" y="386.30" class="tl" style="font-size:10.9px" fill="#4099dd">$300</text>
<text x="741.5" y="368.97" class="tl" style="font-size:10.9px" fill="#4099dd">$350</text>
<text x="741.5" y="351.63" class="tl" style="font-size:10.9px" fill="#4099dd">$400</text>
<text x="741.5" y="334.30" class="tl" style="font-size:10.9px" fill="#4099dd">$450</text>
<text x="82.90" y="504.6" text-anchor="middle" class="tl" fill="#6a6a73">Jan 30</text>
<text x="146.26" y="504.6" text-anchor="middle" class="tl" fill="#6a6a73">Feb 2</text>
<text x="209.62" y="504.6" text-anchor="middle" class="tl" fill="#6a6a73">Feb 5</text>
<text x="272.99" y="504.6" text-anchor="middle" class="tl" fill="#6a6a73">Feb 8</text>
<text x="336.35" y="504.6" text-anchor="middle" class="tl" fill="#6a6a73">Feb 11</text>
<text x="399.71" y="504.6" text-anchor="middle" class="tl" fill="#6a6a73">Feb 14</text>
<text x="463.07" y="504.6" text-anchor="middle" class="tl" fill="#6a6a73">Feb 17</text>
<text x="526.43" y="504.6" text-anchor="middle" class="tl" fill="#6a6a73">Feb 20</text>
<text x="589.80" y="504.6" text-anchor="middle" class="tl" fill="#6a6a73">Feb 23</text>
<text x="653.16" y="504.6" text-anchor="middle" class="tl" fill="#6a6a73">Feb 26</text>
<text transform="translate(47.8,408) rotate(-90)" text-anchor="middle" class="at" fill="#6a6a73">Views &amp; Visitors</text>
<text transform="translate(721.6,408.5) rotate(90)" text-anchor="middle" class="at" fill="#36904f">Orders</text>
<text transform="translate(774.4,408.5) rotate(90)" text-anchor="middle" class="at" fill="#3a98dc">Net Sales</text>
</svg>

<!-- table card -->
<div class="a" style="left:18px;top:546px;width:787px;height:170px;background:#fff;border:1px solid #e3e0ec;border-bottom:none"></div>
<div class="a" style="left:19px;top:597px;width:785px;height:1px;background:#e8e6ef"></div>
<div class="a" style="left:359.3px;top:547px;width:1px;height:49px;background:#f0eff5"></div>
<div class="a" style="left:547px;top:547px;width:1px;height:49px;background:#f0eff5"></div>
<div class="a" style="left:19px;top:598px;width:785px;height:37.7px;background:#f6f5fa"></div>
<div class="a" style="left:19px;top:674.7px;width:785px;height:40px;background:#f6f5fa"></div>

<div class="rn" style="left:22px;top:562.4px">37</div>
<div class="th" style="left:55px;top:561.5px">Referrer</div><div class="arr" style="left:103.4px;top:564px"></div>
<div class="th" style="left:165.7px;top:561.5px">Visitors</div><div class="arr" style="left:211px;top:564px"></div>
<div class="th" style="left:272.8px;top:561.5px">Views</div><div class="arr" style="left:309.4px;top:564px"></div>
<div class="th" style="left:377.5px;top:561.5px">Orders</div>
<div class="a" style="left:418.3px;top:565px;width:0;height:0;border-left:3px solid transparent;border-right:3px solid transparent;border-top:4.6px solid #5221a0"></div>
<div class="th" style="left:465px;top:561.5px">Net Sales</div><div class="arr" style="left:519px;top:564px"></div>
<div class="th" style="left:560px;top:560.9px;width:88px;text-align:center;font-size:10.55px;line-height:11.5px">Conversion<br>Rate</div><div class="arr" style="left:648px;top:568.3px"></div>
<div class="th" style="left:688px;top:560.9px;width:90px;text-align:center;font-size:10.55px;line-height:11.5px">Earnings Per<br>Visitor</div><div class="arr" style="left:777px;top:568.3px"></div>

<div class="rn" style="left:22px;top:612px">1</div>
<div class="td" style="left:54.5px;top:611px;font-weight:700;color:#24242c;font-size:10.4px;letter-spacing:-0.2px">Reddit</div>
<svg class="a" style="left:88.6px;top:611.2px" width="9" height="9" viewBox="0 0 12 12"><path d="M5 3.05H1.55V10.35H8.15V7.2" fill="none" stroke="#24242c" stroke-width="1.5"/><path d="M5.6 0.6H11V6z" fill="#24242c"/><path d="M5.2 6.9L9.6 2.5" fill="none" stroke="#24242c" stroke-width="1.5"/></svg>
<div class="td" style="left:165.2px;top:611px">395 <span class="pc">(2.95%)</span></div>
<div class="td" style="left:272.5px;top:611px">514 <span class="pc">(3.16%)</span></div>
<div class="td" style="left:377.5px;top:611px">8</div>
<div class="td" style="left:464.6px;top:611px">$830.00</div>
<div class="td" style="left:565.4px;top:611px">2.03%</div>
<div class="td" style="left:693.4px;top:611px">$2.10</div>

<div class="rn" style="left:22px;top:650.5px">2</div>
<div class="td" style="left:54.5px;top:649.5px;font-weight:700;color:#24242c;font-size:10.4px;letter-spacing:-0.2px">Google</div>
<svg class="a" style="left:90.6px;top:649.8px" width="9" height="9" viewBox="0 0 12 12"><path d="M5 3.05H1.55V10.35H8.15V7.2" fill="none" stroke="#24242c" stroke-width="1.5"/><path d="M5.6 0.6H11V6z" fill="#24242c"/><path d="M5.2 6.9L9.6 2.5" fill="none" stroke="#24242c" stroke-width="1.5"/></svg>
<div class="td" style="left:165.2px;top:649.5px">11,444 <span class="pc">(85.45%)</span></div>
<div class="td" style="left:272.5px;top:649.5px">13,277 <span class="pc">(81.75%)</span></div>
<div class="td" style="left:377.5px;top:649.5px">7</div>
<div class="td" style="left:464.6px;top:649.5px">$799.00</div>
<div class="td" style="left:565.4px;top:649.5px">0.06%</div>
<div class="td" style="left:693.4px;top:649.5px">$0.07</div>

<div class="rn" style="left:22px;top:689px">3</div>
<div class="td" style="left:54.5px;top:688px;font-weight:700;color:#24242c;font-size:10.4px;letter-spacing:-0.2px">Direct</div>
<div class="td" style="left:165.2px;top:688px">1,060 <span class="pc">(7.91%)</span></div>
<div class="td" style="left:272.5px;top:688px">1,628 <span class="pc">(10.02%)</span></div>
<div class="td" style="left:377.5px;top:688px">3</div>
<div class="td" style="left:464.6px;top:688px">$554.00</div>
<div class="td" style="left:565.4px;top:688px">0.28%</div>
<div class="td" style="left:693.4px;top:688px">$0.52</div>

<!-- scroll top -->
<div class="a" style="left:757.5px;top:680.3px;width:41.4px;height:41.4px;border-radius:50%;background:#5221a0;box-shadow:0 0 5px rgba(40,20,80,0.08)"></div>
<svg class="a" style="left:771px;top:693px" width="14" height="16" viewBox="0 0 14 16">
  <path d="M7 14.2V3.4M2.6 7.8L7 3.4 11.4 7.8" fill="none" stroke="#fff" stroke-width="1.3"/>
</svg>

</body></html>
